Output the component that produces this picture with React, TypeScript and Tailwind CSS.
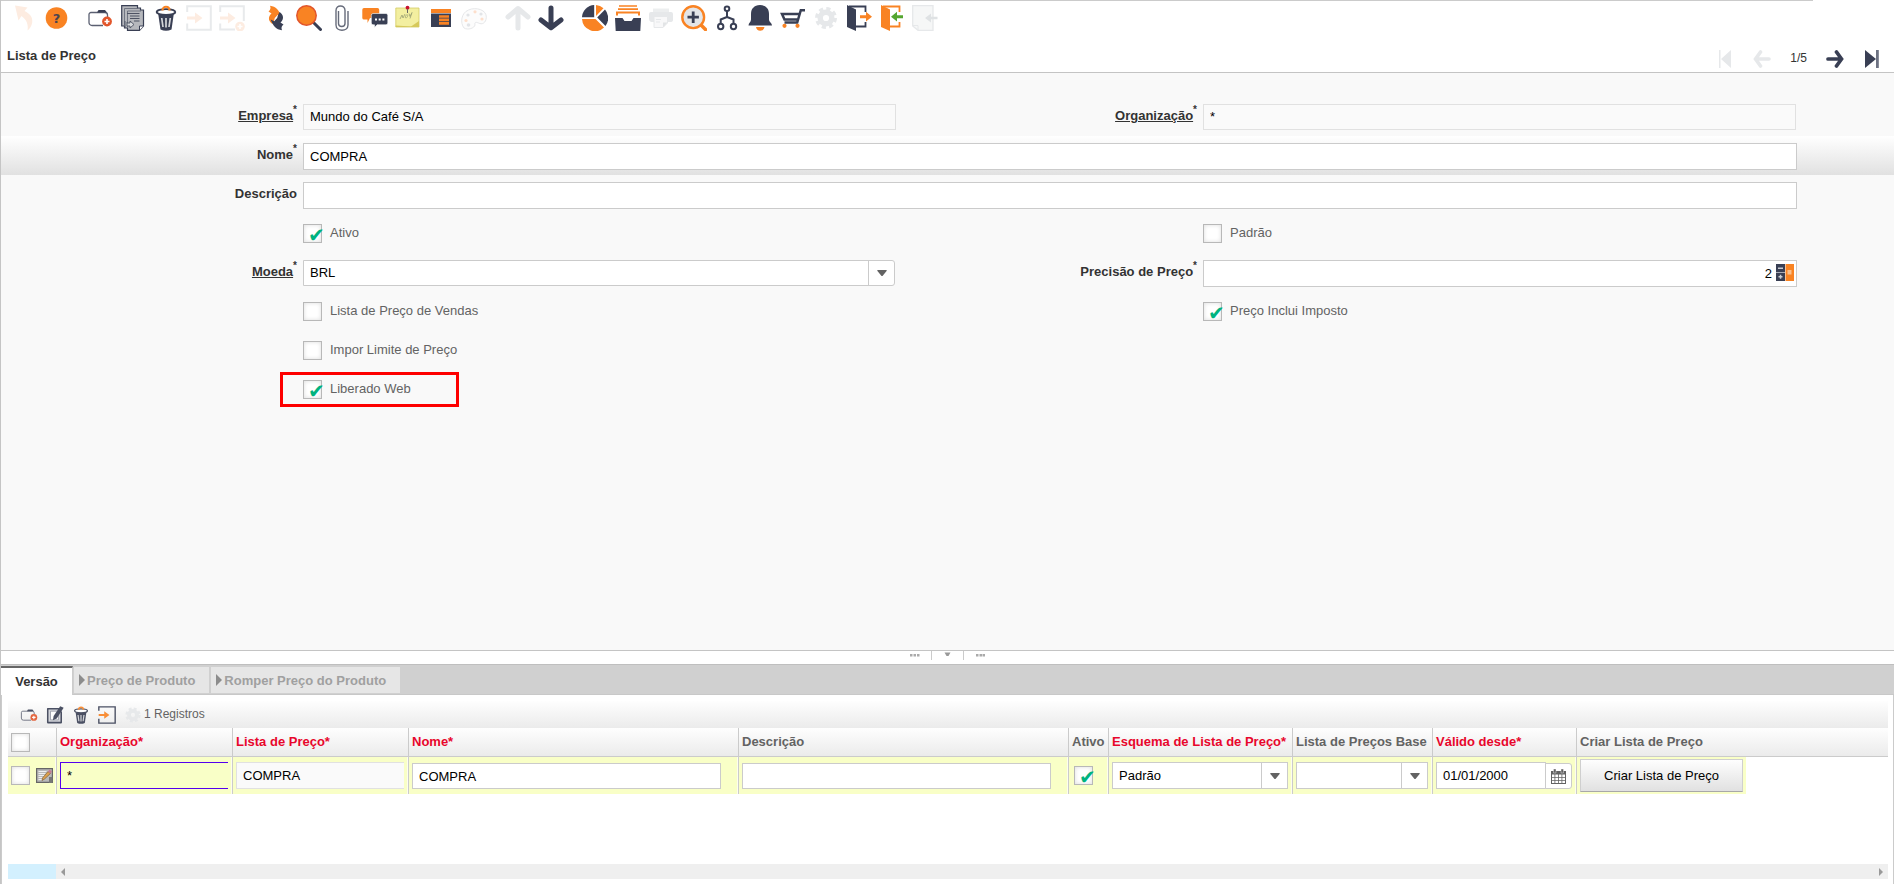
import type { ReactNode } from "react";

const ORANGE = "#f98323";
const DARK = "#393f54";
const RED = "#e2562b";

type IconProps = { children: ReactNode; className?: string };

function Icon({ children, className = "size-[26px]" }: IconProps) {
  return (
    <svg viewBox="0 0 26 26" fill="none" className={className} aria-hidden="true">
      {children}
    </svg>
  );
}

const undo = (
  <path d="M5 .5 17.500 2.500 14.500 6C20 8.500 23 12.500 22.200 17.500 21.500 21.500 19.500 24 17.500 25.500 18.500 19.500 16.500 14.500 11.500 11L8.500 15.500Z" fill="#fdece1" />
);
const help = (
  <>
    <circle cx="13.5" cy="13" r="10.800" fill={ORANGE} />
    <text x="13.5" y="18" textAnchor="middle" fontSize="13" fontWeight="700" fontFamily="DejaVu Sans, sans-serif" fill="#4a4450">?</text>
  </>
);
const create = (
  <>
    <path d="M16 20.500H5A3 3 0 0 1 2 17.500V9.500A2 2 0 0 1 4 7.500H18A2.500 2.500 0 0 1 20.500 10V12" stroke="#5b6072" strokeWidth="1.3" />
    <path d="M10 7.500 11.500 5H18L20 7.500Z" fill={DARK} />
    <circle cx="20" cy="16.500" r="4.900" fill={RED} />
    <path d="M17.500 16.500h5M20 14v5" stroke="#fff" strokeWidth="1.6" />
  </>
);
const copy = (
  <>
    <path d="M1.700.7H17.500V3H20.500V5H23.500V21L19.500 25.300H7.500V23H4.500V21H1.700Z" fill="#b6b8bd" stroke={DARK} strokeWidth="1.2" />
    <path d="M4.500 20V3.500H18M7.500 22V6H21" stroke="#5f6474" strokeWidth=".8" />
    <path d="M7 8.500H19.500M10 11H19.500M10 13.500H19.500M14 16H19.500" stroke="#4d5263" strokeWidth="1" />
    <path d="M5 16v7M7 17v4h3v2l4-3.500-4-3.500v2H7" stroke="#4d5263" strokeWidth=".9" fill="#d8dadd" />
    <path d="M19.500 25.300V21H23.500" fill="#fff" stroke={DARK} strokeWidth="1" />
  </>
);
const trash = (
  <>
    <path d="M5 7.500 7.500 24.500Q13 27 18.500 24.500L21 7.500Z" fill={DARK} />
    <ellipse cx="13" cy="7" rx="9.300" ry="2.900" fill="#fff" stroke={DARK} strokeWidth="1.8" />
    <path d="M9.500 5.500C9.500.500 16.500.500 16.500 5.500" stroke={ORANGE} strokeWidth="2.200" />
    <path d="M8.700 13l1.300 9M13 13v9.500M17.300 13l-1.300 9" stroke="#d4d6da" strokeWidth="1.7" />
  </>
);

function saveShape(frame: string, arrow: string, plus = false) {
  return (
    <>
      <path d={plus ? "M1.200 7V1.200H24.800V16M1.200 18.500V24.500H16" : "M1.200 7V1.200H24.800V24.800H1.200V18.500"} stroke={frame} strokeWidth="2" />
      <path d="M1 11.500H9V7.500L16.500 13 9 18.500V14.500H1Z" fill={arrow} />
      {plus && (
        <>
          <circle cx="21" cy="21.500" r="4.800" fill={arrow} />
          <path d="M18.500 21.500h5M21 19v5" stroke="#fff" strokeWidth="1.5" />
        </>
      )}
    </>
  );
}

const refreshArrow = "M7 .800C13 1.500 16 5 18.300 11.500L14.800 9.800 11.800 13C11.200 15.500 10.500 17 9.500 19 5.500 16.500 4.500 12 8.500 8.500L5.500 6.500C7.500 5 8 3 7 .800Z";
const refresh = (
  <>
    <path d={refreshArrow} fill={ORANGE} />
    <path d={refreshArrow} fill={DARK} transform="rotate(180 13 13)" />
  </>
);
const find = (
  <>
    <path d="M17.500 17.500 24.500 24.500" stroke={DARK} strokeWidth="3" strokeLinecap="round" />
    <circle cx="10.500" cy="10.500" r="9.700" fill={ORANGE} stroke={RED} strokeWidth="1.5" />
  </>
);
const clip = (
  <path d="M9.500 6V18.500C9.500 22.500 16 22.500 16 18.500V5.500C16 -.500 7 -.500 7 5.500V20C7 27 19 27 19 20V6" stroke="#666b7a" strokeWidth="1.4" />
);
const chat = (
  <>
    <path d="M2 3H15.500A1.700 1.700 0 0 1 17.200 4.700V13H8L5.500 18V14.500H2A1.700 1.700 0 0 1 .300 13V4.700A1.700 1.700 0 0 1 2 3Z" fill={ORANGE} />
    <path d="M11 8.500H24A1.800 1.800 0 0 1 25.800 10.300V18A1.800 1.800 0 0 1 24 19.800H15L12.500 22.500V19.800H11A1.800 1.800 0 0 1 9.300 18V10.300A1.800 1.800 0 0 1 11 8.500Z" fill={DARK} stroke="#fff" strokeWidth=".6" />
    <path d="M13 13.500h2v2h-2zM16.700 13.500h2v2h-2zM20.400 13.500h2v2h-2z" fill="#fff" />
  </>
);
const note = (
  <>
    <path d="M.800 3H24V22H.800Z" fill="#f3efa0" stroke="#d3cb66" strokeWidth=".8" />
    <path d="M16 21.500 24 16V22H.800V20.500Z" fill="#d6c95b" />
    <path d="M5 14l2-4 1 3 2-4M10.500 11.500c1-3 3-2 2 0s-2.500 2-2 0M14 8.500l1 3 2-4-2 6" stroke="#a3a878" strokeWidth=".9" />
    <circle cx="12.500" cy="2.700" r="1.900" fill="#c8102e" />
    <path d="M12.500 4v4" stroke="#666" strokeWidth="1" />
  </>
);
const grid = (
  <>
    <path d="M3 4H23V8H3Z" fill={ORANGE} />
    <path d="M3 8.500H23V22H3Z" fill={DARK} />
    <path d="M11 10.300H21V12.700H11ZM11 13.500H21V16H11ZM11 16.800H21V19.800H11Z" fill={ORANGE} />
  </>
);
const palette = (
  <>
    <path d="M3 23C-1 18 0 8 7.500 5 15 1.500 26 5 25.300 12.500 25 18 21 20 17.500 18 14 16.500 13.500 18 14 20 13.500 23 7 25.500 3 23Z" fill="#fcfcfc" stroke="#e6e7e9" strokeWidth="1" />
    <circle cx="7" cy="10" r="1.600" fill="#e2e4e7" />
    <circle cx="14" cy="6.800" r="1.600" fill="#fddfcc" />
    <circle cx="20" cy="9" r="1.600" fill="#e2e4e7" />
    <circle cx="21" cy="14" r="1.600" fill="#fddfcc" />
    <circle cx="5" cy="15.500" r="1.600" fill="#fddfcc" />
    <circle cx="7.500" cy="20" r="1.800" fill="#e2e4e7" />
  </>
);
const arrowUp = <path d="M13 23V4M3 12 13 3.500 23 12" stroke="#e6e8ea" strokeWidth="5" strokeLinecap="round" strokeLinejoin="round" />;
const arrowDown = <path d="M13 3V22M3 15 13 22.800 23 15" stroke={DARK} strokeWidth="5" strokeLinecap="round" strokeLinejoin="round" />;
const pie = (
  <>
    <path d="M12.200 12.200H0A13 13 0 0 1 12.200 0Z" fill={DARK} />
    <path d="M14 0A13 13 0 0 1 21.500 3.200L14 11Z" fill={ORANGE} />
    <path d="M23 4.600A13 13 0 0 1 23.500 21L15.200 12.600Z" fill={DARK} />
    <path d="M0 14H13.500L22 22.500A13 13 0 0 1 0 14Z" fill={ORANGE} />
  </>
);
const archive = (
  <>
    <path d="M4 1H22M3 4.200H23" stroke={ORANGE} strokeWidth="1.700" />
    <path d="M2 10.500V7.500H24V10.500" stroke={ORANGE} strokeWidth="2" />
    <path d="M0 13H7.500L9.500 16H16.500L18.500 13H26L25.300 26H.700Z" fill={DARK} />
  </>
);
const print = (
  <>
    <path d="M5 3.500H21V7H5Z" fill="#eceeef" />
    <path d="M3 7H23A2 2 0 0 1 25 9V15Q25 17 22 17H19.500V12H6V17H3Q1 16 1 14V9A2 2 0 0 1 3 7Z" fill="#e6e8ea" />
    <path d="M6 11.500H19.500V18L15 22.500H6Z" fill="#f8f8f9" stroke="#e6e8ea" />
    <path d="M19.500 17.500 15 22.500V17.500Z" fill="#e2e4e6" />
    <path d="M8 14.500h5M8 17h4" stroke="#e6e8ea" />
  </>
);
const zoomIn = (
  <>
    <path d="M20 20 24.500 24.500" stroke={ORANGE} strokeWidth="3.500" strokeLinecap="round" />
    <circle cx="12.200" cy="12.200" r="10.900" fill="#e3e5e8" stroke={ORANGE} strokeWidth="2.400" />
    <path d="M6.500 12.200h11.400M12.200 6.500v11.400" stroke={DARK} strokeWidth="2.800" />
  </>
);
const tree = (
  <g stroke={DARK} strokeWidth="2">
    <circle cx="13" cy="3.800" r="2.300" />
    <circle cx="6.700" cy="21.500" r="2.700" />
    <circle cx="19.500" cy="21.500" r="2.700" />
    <path d="M13 6V12L6.700 14.500V19M13 12 19.500 14.500V19" />
  </g>
);
const bell = (
  <>
    <path d="M9 22H17.500A4.300 4.300 0 0 1 9 22Z" fill={ORANGE} />
    <path d="M13 0C19 .500 22 3.500 22 9V14.500C22 17 25 18 25 20.500H1.500C1.500 18 4 17 4 14.500V9C4 3.500 7 .500 13 0Z" fill={DARK} />
  </>
);
const cart = (
  <>
    <path d="M25 5.200H20.800L17.200 17.500H4.500M19.300 9H2L4.500 14.500H18" stroke={DARK} strokeWidth="2.500" />
    <circle cx="4.500" cy="20.800" r="2.100" fill={ORANGE} />
    <circle cx="17.500" cy="20.800" r="2.100" fill={ORANGE} />
  </>
);
const gear = (
  <>
    <circle cx="13" cy="13" r="9" stroke="#e6e8ea" strokeWidth="4" strokeDasharray="4 3.070" />
    <circle cx="13" cy="13" r="5.800" stroke="#e6e8ea" strokeWidth="5.400" />
  </>
);

function doorShape(color: string) {
  return (
    <>
      <path d="M3 1.500H19.500V7M19.500 17V21.500H10" stroke={color} strokeWidth="1.800" />
      <path d="M1 0 10 4.500V26L1 22Z" fill={color} />
    </>
  );
}
const exit = (
  <>
    {doorShape(DARK)}
    <path d="M14 10.300H20V6.800L26 11.800 20 16.500V13.200H14Z" fill={ORANGE} />
  </>
);
const enter = (
  <g transform="translate(1 0)">
    {doorShape(ORANGE)}
    <path d="M23 10.300H17V6.800L11 11.800 17 16.500V13.200H23Z" fill="#55a630" />
  </g>
);
const pageIn = (
  <>
    <path d="M.700.700H21V25.300H6L.700 21Z" fill="#f6f7f7" stroke="#e6e8ea" strokeWidth="1.300" />
    <path d="M6 25V20.500H1" stroke="#e6e8ea" />
    <path d="M25.500 11.700H19V8.500L13 13 19 17.500V14.300H25.500Z" fill="#dfe2e4" />
  </>
);
const edit = (
  <>
    <path d="M2.500 4H18L22 9V24H2.500Z" fill="#cfd1d7" stroke={DARK} strokeWidth="2.200" strokeLinejoin="round" />
    <path d="M6.500 7.500H18V20H6.500Z" fill="#fff" stroke="#8b8f9c" strokeWidth="1.200" />
    <path d="M20.500.500 25.500 2.500 15.500 18 10 20.500 11 14.500Z" fill={DARK} />
  </>
);

const toolbarGroups: { label: string; art: ReactNode }[][] = [
  [
    { label: "Desfazer", art: undo },
    { label: "Ajuda", art: help },
  ],
  [
    { label: "Novo", art: create },
    { label: "Copiar", art: copy },
    { label: "Excluir", art: trash },
    { label: "Salvar", art: saveShape("#e8eaec", "#fdece1") },
    { label: "Salvar e criar", art: saveShape("#e8eaec", "#fdece1", true) },
  ],
  [
    { label: "Atualizar", art: refresh },
    { label: "Localizar", art: find },
    { label: "Anexo", art: clip },
    { label: "Conversa", art: chat },
    { label: "Nota", art: note },
    { label: "Grade", art: grid },
    { label: "Personalizar", art: palette },
  ],
  [
    { label: "Registro pai", art: arrowUp },
    { label: "Registro detalhe", art: arrowDown },
  ],
  [
    { label: "Relatório", art: pie },
    { label: "Arquivo", art: archive },
    { label: "Imprimir", art: print },
    { label: "Zoom", art: zoomIn },
    { label: "Fluxo de trabalho", art: tree },
    { label: "Solicitações", art: bell },
    { label: "Produto", art: cart },
    { label: "Processo", art: gear },
    { label: "Exportar", art: exit },
    { label: "Importar", art: enter },
    { label: "Importar arquivo", art: pageIn },
  ],
];

function IconButton({ label, children }: { label: string; children: ReactNode }) {
  return (
    <button type="button" aria-label={label} className="shrink-0">
      {children}
    </button>
  );
}

function Checkbox({ id, label, checked = false }: { id: string; label?: string; checked?: boolean }) {
  return (
    <input
      id={id}
      type="checkbox"
      defaultChecked={checked}
      aria-label={label}
      className="relative size-[19px] shrink-0 appearance-none border border-[#b8b8b8] bg-white shadow-[inset_0_0_4px_#ddd] before:absolute before:top-0 before:left-1 before:hidden before:font-['DejaVu_Sans',sans-serif] before:text-[20px] before:leading-[20px] before:text-[#00b37f] before:content-['✔'] checked:before:block"
    />
  );
}

function CheckField({ id, text, checked, className = "" }: { id: string; text: string; checked?: boolean; className?: string }) {
  return (
    <div className={`flex gap-2 pt-2.5 text-[#636363] ${className}`}>
      <Checkbox id={id} checked={checked} />
      <label htmlFor={id} className="pt-px">
        {text}
      </label>
    </div>
  );
}

function FieldLabel({ htmlFor, text, required, linked }: { htmlFor: string; text: string; required?: boolean; linked?: boolean }) {
  return (
    <label htmlFor={htmlFor} className="flex justify-end pt-[11px] pr-1.5 font-bold text-[#333]">
      <span className={linked ? "underline" : ""}>{text}</span>
      {required && <span className="-mt-1.5 text-[10px] leading-[15px]">*</span>}
    </label>
  );
}

const row = "grid min-h-[39px] grid-cols-[302fr_593fr_307fr_594fr_97fr]";
const box = "min-w-0 border border-[#cbcbcb] bg-white px-1.5 text-black";
const lockedBox = "mt-[7px] h-[26px] min-w-0 border border-[#e1e1e1] bg-[#fafafa] px-1.5 pb-0.5 text-black";

function Chevron() {
  return (
    <span className="pointer-events-none flex w-[26px] shrink-0 items-center justify-center border-l border-[#cbcbcb]">
      <svg viewBox="0 0 10 6" className="h-1.5 w-2.5">
        <path d="M0 .500 1 0H9L10 .500 5.500 6H4.500Z" fill="#636363" />
      </svg>
    </span>
  );
}

function SelectBox({ id, label, value, className }: { id: string; label?: string; value: string; className: string }) {
  return (
    <div className={`relative flex justify-end border border-[#cbcbcb] bg-white ${className}`}>
      <select id={id} aria-label={label} defaultValue={value} className="absolute inset-0 w-full appearance-none px-1.5 pb-px text-black">
        <option>{value}</option>
      </select>
      <Chevron />
    </div>
  );
}

const columns = [
  { title: "Organização*", required: true },
  { title: "Lista de Preço*", required: true },
  { title: "Nome*", required: true },
  { title: "Descrição" },
  { title: "Ativo" },
  { title: "Esquema de Lista de Preço*", required: true },
  { title: "Lista de Preços Base" },
  { title: "Válido desde*", required: true },
];

const head = "h-[29px] border-b border-[#cbcbcb] bg-linear-to-b from-[#fefefe] to-[#ebebeb] text-left whitespace-nowrap";
const cell = "h-[37px] border-r border-[#cbcbcb] bg-[#f9ffc7] shadow-[inset_-1px_0_#fdfdf0] pl-[3px]";
const idleTab = "mt-px flex h-[26px] items-center gap-0.5 bg-[#e6e6e6] pr-[14px] pl-[5px] font-bold text-[#a0a0a0]";

export default function App() {
  return (
    <div className="flex min-h-screen flex-col border-l border-[#c5c5c5] bg-white font-['Liberation_Sans',Arial,sans-serif] text-[13px] leading-[15px]">
      <header className="border-b border-[#c4c4c4]">
        <div className="h-px w-[95.7%] bg-[#cbcbcb]" />
        <div className="flex gap-[18px] pt-1 pl-[9px]">
          {toolbarGroups.map((group) => (
            <div key={group[0].label} className="flex gap-[7px]">
              {group.map((item) => (
                <IconButton key={item.label} label={item.label}>
                  <Icon>{item.art}</Icon>
                </IconButton>
              ))}
            </div>
          ))}
        </div>
        <div className="flex h-[41px] items-end justify-between pr-[13px] pb-1 pl-1.5">
          <h1 className="pb-[5px] font-bold text-[#333]">Lista de Preço</h1>
          <nav aria-label="Registros" className="flex items-center gap-[19px]">
            <IconButton label="Primeiro">
              <svg viewBox="0 0 18 18" className="size-[18px]">
                <path d="M3 0H4.500V18H3ZM15 0V18L5 9Z" fill="#e6e8ea" />
              </svg>
            </IconButton>
            <IconButton label="Anterior">
              <svg viewBox="0 0 18 18" fill="none" className="size-[18px]">
                <path d="M16 9H3M7.500 2 2.500 9 7.500 16" stroke="#e6e8ea" strokeWidth="3.600" strokeLinecap="round" />
              </svg>
            </IconButton>
            <span className="pb-0.5 text-xs text-[#333]">1/5</span>
            <IconButton label="Próximo">
              <svg viewBox="0 0 18 18" fill="none" className="size-[18px]">
                <path d="M2 9H15M10.500 2 15.500 9 10.500 16" stroke={DARK} strokeWidth="3.700" strokeLinecap="round" />
              </svg>
            </IconButton>
            <IconButton label="Último">
              <svg viewBox="0 0 18 18" className="size-[18px]">
                <path d="M2 0 13 9 2 18Z" fill={DARK} />
                <path d="M13 0H15.800V18H13Z" fill="#6d7282" />
              </svg>
            </IconButton>
          </nav>
        </div>
      </header>

      <main className="flex-1 bg-[#f9f9f9] pt-6">
        <div className={row}>
          <FieldLabel htmlFor="empresa" text="Empresa" required linked />
          <input id="empresa" readOnly defaultValue="Mundo do Café S/A" className={lockedBox} />
          <FieldLabel htmlFor="organizacao" text="Organização" required linked />
          <input id="organizacao" readOnly defaultValue="*" className={`${lockedBox} mr-px`} />
        </div>
        <div className={`${row} bg-linear-to-b from-white to-[#e1e1e1]`}>
          <FieldLabel htmlFor="nome" text="Nome" required />
          <input id="nome" defaultValue="COMPRA" className={`${box} col-span-3 mt-[7px] h-[27px]`} />
        </div>
        <div className={row}>
          <FieldLabel htmlFor="descricao" text="Descrição" />
          <input id="descricao" className={`${box} col-span-3 mt-[7px] h-[27px]`} />
        </div>
        <div className={row}>
          <CheckField id="ativo" text="Ativo" checked className="col-start-2" />
          <CheckField id="padrao" text="Padrão" className="col-start-4" />
        </div>
        <div className={row}>
          <FieldLabel htmlFor="moeda" text="Moeda" required linked />
          <SelectBox id="moeda" value="BRL" className="mt-[7px] mr-px h-[26px] rounded-r-[3px]" />
          <FieldLabel htmlFor="precisao" text="Precisão de Preço" required />
          <div className="mt-[7px] flex h-[27px] items-center border border-[#cbcbcb] bg-white pr-0.5">
            <input id="precisao" defaultValue="2" className="min-w-0 flex-1 pr-1 text-right text-black" />
            <button type="button" aria-label="Calculadora" className="pb-0.5">
              <svg viewBox="0 0 18 17" className="h-[17px] w-[18px]">
                <path d="M0 0H9V17H0Z" fill={DARK} />
                <path d="M0 8H9V9H0Z" fill="#a9acb6" />
                <path d="M9.500 0H18V17H9.500Z" fill={ORANGE} />
                <path d="M2 3.500H7V5H2ZM2.500 12H6.500V13.500H2.500ZM3.800 10.800H5.300V14.700H3.800Z" fill="#c9ccd3" />
                <path d="M11.500 6H15.500V10.500H11.500Z" fill="#fbc08d" />
              </svg>
            </button>
          </div>
        </div>
        <div className={row}>
          <CheckField id="vendas" text="Lista de Preço de Vendas" className="col-start-2" />
          <CheckField id="imposto" text="Preço Inclui Imposto" checked className="col-start-4" />
        </div>
        <div className={row}>
          <CheckField id="limite" text="Impor Limite de Preço" className="col-start-2" />
        </div>
        <div className={row}>
          <div className="relative col-start-2">
            <CheckField id="web" text="Liberado Web" checked />
            <div className="pointer-events-none absolute top-0.5 -left-[23px] h-[35px] w-[179px] border-3 border-[#fe0000]" />
          </div>
        </div>
      </main>

      <div className="flex h-3.5 items-start justify-center border-t border-[#c4c4c4] bg-white pr-0.5">
        <svg viewBox="0 0 76 9" className="h-[9px] w-[76px]" aria-hidden="true">
          <path d="M1 3h2.500v2.500H1zM4.500 3h2.500v2.500H4.500zM8 3h2.500v2.500H8zM67 3h2.500v2.500H67zM70.500 3h2.500v2.500h-2.500zM73.500 3H76v2.500h-2.500z" fill="#aaa" />
          <path d="M22 0h1v9h-1zM54 0h1v9h-1z" fill="#cbcbcb" />
          <path d="M35.500 1.500h6L39.500 5h-2z" fill="#999" />
        </svg>
      </div>

      <section className="border-x border-[#cbcbcb]">
        <div role="tablist" className="-mx-px flex h-[31px] items-start gap-0.5 border-y border-t-[#bfbfbf] border-b-[#c8c8c8] bg-[#d0d0d0] pt-px">
          <button role="tab" type="button" aria-selected="true" className="-mr-px h-[29px] w-[72px] border-t-2 border-r border-[#666] border-r-[#ccc] bg-white font-bold text-[#333]">
            Versão
          </button>
          <button role="tab" type="button" aria-selected="false" className={idleTab}>
            <svg viewBox="0 0 6 12" className="h-3 w-1.5">
              <path d="M0 0 6 6 0 12Z" fill="#8c8c8c" />
            </svg>
            Preço de Produto
          </button>
          <button role="tab" type="button" aria-selected="false" className={idleTab}>
            <svg viewBox="0 0 6 12" className="h-3 w-1.5">
              <path d="M0 0 6 6 0 12Z" fill="#8c8c8c" />
            </svg>
            Romper Preço do Produto
          </button>
        </div>

        <div className="pt-1.5 pr-[5px] pb-[5px] pl-1.5">
          <div className="flex h-[27px] items-center gap-0.5 bg-linear-to-b from-[#fefefe] to-[#ebebeb] pl-3">
            <div className="flex items-center gap-2 opacity-90">
              <IconButton label="Novo registro">
                <Icon className="size-[18px]">{create}</Icon>
              </IconButton>
              <IconButton label="Editar registro">
                <Icon className="size-[18px]">{edit}</Icon>
              </IconButton>
              <IconButton label="Excluir registro">
                <Icon className="size-[18px]">{trash}</Icon>
              </IconButton>
              <IconButton label="Salvar registro">
                <Icon className="size-[18px]">{saveShape(DARK, ORANGE)}</Icon>
              </IconButton>
              <IconButton label="Processar registro">
                <Icon className="size-[18px]">{gear}</Icon>
              </IconButton>
            </div>
            <span className="pb-0.5 text-xs text-[#636363]">1 Registros</span>
          </div>

          <table className="w-full table-fixed border-separate border-spacing-0">
            <colgroup>
              <col className="w-[49px]" />
              <col className="w-[176px]" />
              <col className="w-[176px]" />
              <col className="w-[330px]" />
              <col className="w-[330px]" />
              <col className="w-10" />
              <col className="w-[184px]" />
              <col className="w-[140px]" />
              <col className="w-[144px]" />
              <col className="w-[169px]" />
              <col />
            </colgroup>
            <thead>
              <tr>
                <th className={`${head} border-r pl-[3px]`}>
                  <div className="flex">
                    <Checkbox id="todos" label="Selecionar todos" />
                  </div>
                </th>
                {columns.map((c) => (
                  <th key={c.title} className={`${head} border-r pb-0.5 pl-[3px] ${c.required ? "text-[#e8062c]" : "text-[#636363]"}`}>
                    {c.title}
                  </th>
                ))}
                <th className={`${head} pb-0.5 pl-[3px] text-[#636363]`}>Criar Lista de Preço</th>
                <td className={head} />
              </tr>
            </thead>
            <tbody>
              <tr>
                <td className={cell}>
                  <div className="flex items-center gap-1.5">
                    <Checkbox id="linha" label="Selecionar linha" />
                    <IconButton label="Editar linha">
                      <svg viewBox="0 0 17 15" className="h-[15px] w-[17px]">
                        <path d="M.600.600H16.400V14.400H.600Z" fill="#b9b9b9" stroke="#666" strokeWidth="1.200" />
                        <path d="M2.500 3.500h8M2.500 5.500h7M2.500 7.500h6M2.500 9.500h4M2.500 11.500h4" stroke="#eee" />
                        <path d="M12 3.500 14.500 5.500 8.500 11 6 12.500 6.500 10Z" fill="#dba04e" stroke="#75552b" strokeWidth=".6" />
                        <path d="M12 3.500 13.500 1.500 16 3.500 14.500 5.500Z" fill="#c47d95" />
                        <path d="M13 9h3.500v6H13z" fill="#777" />
                      </svg>
                    </IconButton>
                  </div>
                </td>
                <td className={cell}>
                  <input aria-label="Organização da versão" defaultValue="*" className="block h-[27px] w-[168px] border border-r-0 border-[#5500ee] bg-transparent px-1.5 text-black" />
                </td>
                <td className={cell}>
                  <input aria-label="Lista de Preço" readOnly defaultValue="COMPRA" className="block h-[27px] w-[168px] border border-r-0 border-[#e1e1e1] bg-[#fafafa] px-1.5 text-black" />
                </td>
                <td className={cell}>
                  <input aria-label="Nome da versão" defaultValue="COMPRA" className={`${box} mt-px block h-[26px] w-[309px]`} />
                </td>
                <td className={cell}>
                  <input aria-label="Descrição da versão" className={`${box} mt-px block h-[26px] w-[309px]`} />
                </td>
                <td className={cell}>
                  <div className="flex pl-0.5">
                    <Checkbox id="versao-ativa" label="Versão ativa" checked />
                  </div>
                </td>
                <td className={cell}>
                  <SelectBox id="esquema" label="Esquema de Lista de Preço" value="Padrão" className="h-[27px] w-[176px]" />
                </td>
                <td className={cell}>
                  <SelectBox id="base" label="Lista de Preços Base" value="" className="h-[27px] w-[132px]" />
                </td>
                <td className={cell}>
                  <div className="flex items-end">
                    <input aria-label="Válido desde" defaultValue="01/01/2000" className={`${box} h-[27px] w-[110px]`} />
                    <button type="button" aria-label="Abrir calendário" className="-ml-px flex h-[26px] w-[27px] items-center justify-center rounded-r-[3px] border border-[#cbcbcb] bg-white">
                      <svg viewBox="0 0 15 15" className="size-[15px]">
                        <path d="M0 2H15V15H0Z" fill="#636363" />
                        <path d="M1 5.500h2.500V8H1zM4.300 5.500h2.700V8H4.300zM7.800 5.500h2.700V8H7.800zM11.300 5.500H14V8h-2.700zM1 8.800h2.500v2.400H1zM4.300 8.800h2.700v2.400H4.300zM7.800 8.800h2.700v2.400H7.800zM11.300 8.800H14v2.400h-2.700zM1 12h2.500v2H1zM4.300 12h2.700v2H4.300zM7.800 12h2.700v2H7.800zM11.300 12H14v2h-2.700z" fill="#fff" />
                        <path d="M2.500 0H5V4H2.500ZM10 0H12.500V4H10Z" fill="#636363" stroke="#fff" strokeWidth=".4" />
                      </svg>
                    </button>
                  </div>
                </td>
                <td className="h-[37px] bg-[#f9ffc7] pl-[3px]">
                  <button type="button" className="block h-[33px] w-[163px] border border-[#cfcfcf] border-b-[#a8a8a8] bg-linear-to-b from-[#fefefe] to-[#e1e1e1] text-black">
                    Criar Lista de Preço
                  </button>
                </td>
                <td />
              </tr>
            </tbody>
          </table>

          <div className="mt-[70px] flex h-[15px]" aria-hidden="true">
            <div className="w-12 bg-[#d3f0fe]" />
            <div className="flex flex-1 items-center justify-between bg-[#efefef] px-[5px]">
              <svg viewBox="0 0 4 8" className="h-2 w-1">
                <path d="M4 0V8L0 4Z" fill="#999" />
              </svg>
              <svg viewBox="0 0 4 8" className="h-2 w-1">
                <path d="M0 0V8L4 4Z" fill="#999" />
              </svg>
            </div>
          </div>
        </div>
      </section>
    </div>
  );
}
